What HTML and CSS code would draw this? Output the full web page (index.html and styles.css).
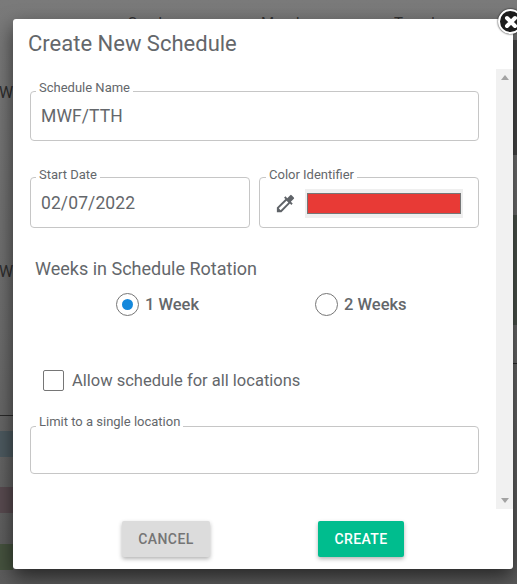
FILE: index.html
```html
<!DOCTYPE html>
<html>
<head>
    <title>Create New Schedule</title>
    <link rel="stylesheet" href="styles.css">
</head>
<body>
    <!-- Page behind the dialog -->
    <div class="backdrop">
        <div class="day-row">
            <span>Sunday</span>
            <span>Monday</span>
            <span>Tuesday</span>
        </div>
        <span class="side-letter side-letter-one">W</span>
        <span class="side-letter side-letter-two">W</span>
        <div class="strip strip-right-one"></div>
        <div class="strip strip-right-two"></div>
        <div class="strip strip-right-line"></div>
        <div class="strip strip-left-line"></div>
        <div class="strip strip-left-one"></div>
        <div class="strip strip-left-two"></div>
        <div class="strip strip-left-three"></div>
    </div>

    <div class="modal">
        <button class="close-btn" type="button" aria-label="Close">
            <svg width="18" height="18" viewBox="0 0 18 18">
                <path d="M5 5L13 13M13 5L5 13" stroke="#fff" stroke-width="4" stroke-linecap="round"/>
            </svg>
        </button>

        <h1 class="modal-title">Create New Schedule</h1>

        <div class="modal-body">
            <div class="scroll-area">
                <div class="field field-name">
                    <span class="field-label">Schedule Name</span>
                    <span class="field-value">MWF/TTH</span>
                </div>

                <div class="field-row">
                    <div class="field field-date">
                        <span class="field-label">Start Date</span>
                        <span class="field-value">02/07/2022</span>
                    </div>
                    <div class="field field-color">
                        <span class="field-label">Color Identifier</span>
                        <svg class="dropper" viewBox="0 0 24 24">
                            <path fill="#5f6368" d="M20.71 5.63l-2.34-2.34a1 1 0 0 0-1.41 0l-3.12 3.12-1.93-1.91-1.41 1.41 1.42 1.42L3 16.25V21h4.75l8.92-8.92 1.42 1.42 1.41-1.41-1.92-1.92 3.12-3.12a1 1 0 0 0 .01-1.42zM6.92 19L5 17.08l8.06-8.06 1.92 1.92L6.92 19z"/>
                        </svg>
                        <span class="swatch"><span class="swatch-fill"></span></span>
                    </div>
                </div>

                <div class="rotation-title">Weeks in Schedule Rotation</div>
                <div class="radio-row">
                    <label class="radio-item">
                        <span class="radio radio-on"></span>
                        <span>1 Week</span>
                    </label>
                    <label class="radio-item">
                        <span class="radio"></span>
                        <span>2 Weeks</span>
                    </label>
                </div>

                <label class="check-row">
                    <span class="checkbox"></span>
                    <span>Allow schedule for all locations</span>
                </label>

                <div class="field field-location">
                    <span class="field-label">Limit to a single location</span>
                </div>
            </div>

            <div class="scrollbar">
                <span class="arrow arrow-up"></span>
                <span class="arrow arrow-down"></span>
            </div>
        </div>

        <div class="modal-actions">
            <button class="btn btn-cancel" type="button">Cancel</button>
            <button class="btn btn-create" type="button">Create</button>
        </div>
    </div>
</body>
</html>
```

FILE: styles.css
```css
* {
  box-sizing: border-box;
  margin: 0;
  padding: 0;
}

html, body {
  height: 100%;
}

body {
  font-family: Roboto, "Liberation Sans", sans-serif;
  color: #64676b;
  overflow: hidden;
  background: #6a6a6a;
}

/* Dimmed page behind the dialog */
.backdrop {
  position: absolute;
  inset: 0;
  overflow: hidden;
  background: linear-gradient(to bottom, #7a7a7a 0, #6c6c6c 60%, #5c5c5c 100%);
}

.day-row {
  position: absolute;
  top: 14px;
  left: 128px;
  display: flex;
  font-size: 15px;
  color: #333;
}

.day-row span {
  width: 133px;
}

.side-letter {
  position: absolute;
  left: -1px;
  font-size: 16px;
  color: #2e2e2e;
}

.side-letter-one {
  top: 83px;
}

.side-letter-two {
  top: 262px;
}

.strip {
  position: absolute;
}

.strip-right-one {
  left: 513px;
  top: 40px;
  width: 4px;
  height: 115px;
  background: #4a4a4a;
}

.strip-right-two {
  left: 513px;
  top: 215px;
  width: 4px;
  height: 110px;
  background: #4e564e;
}

.strip-right-line {
  left: 513px;
  top: 363px;
  width: 4px;
  height: 1px;
  background: #2a2a2a;
}

.strip-left-line {
  left: 0;
  top: 415px;
  width: 13px;
  height: 1px;
  background: #2a2a2a;
}

.strip-left-one {
  left: 0;
  top: 431px;
  width: 13px;
  height: 26px;
  background: #4d5a60;
}

.strip-left-two {
  left: 0;
  top: 487px;
  width: 13px;
  height: 26px;
  background: #594b50;
}

.strip-left-three {
  left: 0;
  top: 544px;
  width: 13px;
  height: 26px;
  background: #46533f;
}

/* Dialog */
.modal {
  position: absolute;
  left: 13px;
  top: 19px;
  width: 500px;
  height: 550px;
  background: #fff;
  border-radius: 3px;
  box-shadow: 0 8px 20px rgba(0, 0, 0, 0.6);
  display: flex;
  flex-direction: column;
}

.close-btn {
  position: absolute;
  top: -10px;
  right: -10px;
  width: 25px;
  height: 25px;
  border: 2px solid #fff;
  border-radius: 50%;
  background: #1d1d1d;
  box-shadow: 0 0 2px #000;
  display: flex;
  align-items: center;
  justify-content: center;
}

.modal-title {
  font-size: 22px;
  font-weight: 400;
  line-height: 25px;
  padding: 12px 0 0 15px;
  height: 50px;
}

.modal-body {
  display: flex;
  height: 440px;
}

.scroll-area {
  flex: 1;
  padding: 22px 17px 0;
}

.scrollbar {
  width: 17px;
  background: #f1f1f1;
  display: flex;
  flex-direction: column;
  justify-content: space-between;
  align-items: center;
  padding: 6px 0;
}

.arrow {
  width: 0;
  height: 0;
  border-left: 4px solid transparent;
  border-right: 4px solid transparent;
}

.arrow-up {
  border-bottom: 5px solid #a3a3a3;
}

.arrow-down {
  border-top: 5px solid #a3a3a3;
}

/* Outlined fields, the label sits over the top border */
.field {
  position: relative;
  border: 1px solid #c6c6c6;
  border-radius: 4px;
}

.field-label {
  position: absolute;
  top: -11px;
  left: 5px;
  padding: 0 3px;
  font-size: 13px;
  line-height: 14px;
  background: #fff;
}

.field-value {
  display: block;
  padding-left: 10px;
  font-size: 17.5px;
  line-height: 24px;
  letter-spacing: 0.1px;
}

.field-name {
  height: 50px;
  padding-top: 12px;
}

.field-row {
  display: flex;
  gap: 9px;
  margin-top: 36px;
}

.field-row .field-label {
  top: -10px;
}

.field-date {
  width: 220px;
  height: 51px;
  padding-top: 13px;
}

.field-color {
  flex: 1;
  height: 51px;
  display: flex;
  align-items: center;
  padding: 2px 15px 0 14px;
}

.field-color .field-label {
  left: 6px;
}

.dropper {
  width: 23px;
  height: 23px;
  flex: none;
  margin-right: 8px;
}

.swatch {
  flex: 1;
  height: 29px;
  background: #efefef;
  padding: 4px 2px;
}

.swatch-fill {
  display: block;
  height: 100%;
  background: #e83a36;
  border: 1px solid #767676;
}

.rotation-title {
  font-size: 18px;
  line-height: 20px;
  margin-top: 31px;
  padding-left: 5px;
}

.radio-row {
  display: flex;
  height: 23px;
  margin-top: 14px;
  padding-left: 86px;
  gap: 116px;
}

.radio-item {
  display: flex;
  align-items: center;
  gap: 6px;
  font-size: 16.5px;
  font-weight: 500;
}

.radio {
  width: 23px;
  height: 23px;
  border: 1px solid #767676;
  border-radius: 50%;
  display: flex;
  align-items: center;
  justify-content: center;
}

.radio-on::after {
  content: "";
  width: 11px;
  height: 11px;
  border-radius: 50%;
  background: #1488dc;
}

.check-row {
  display: flex;
  align-items: center;
  gap: 8px;
  font-size: 16.5px;
  margin-top: 53px;
  padding-left: 13px;
  height: 22px;
}

.checkbox {
  width: 21px;
  height: 21px;
  border: 1px solid #767676;
  border-radius: 2px;
}

.field-location {
  height: 48px;
  margin-top: 35px;
}

.field-location .field-label {
  top: -12px;
}

/* Footer buttons */
.modal-actions {
  display: flex;
  padding: 12px 0 0 109px;
  gap: 108px;
}

.btn {
  height: 36px;
  border: none;
  border-radius: 2px;
  font-family: inherit;
  font-size: 14px;
  font-weight: 500;
  text-transform: uppercase;
  letter-spacing: 0.4px;
  box-shadow: 0 2px 4px rgba(0, 0, 0, 0.3);
}

.btn-cancel {
  width: 88px;
  background: #dcdcdc;
  color: #757575;
}

.btn-create {
  width: 86px;
  background: #00bd8e;
  color: #fff;
}
```
